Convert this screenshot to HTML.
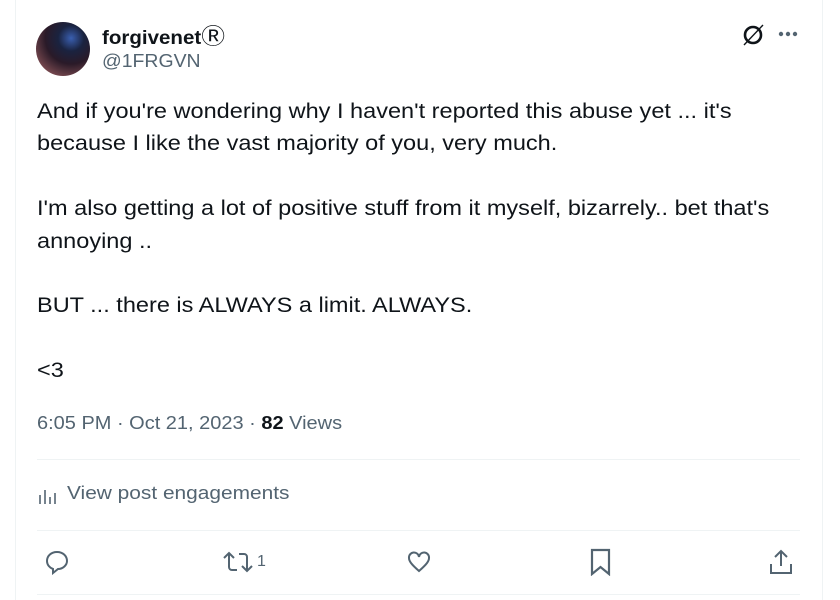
<!DOCTYPE html>
<html><head><meta charset="utf-8"><style>
body{margin:0;background:#fff;width:840px;height:600px;overflow:hidden;font-family:"Liberation Sans",sans-serif;position:relative;color:#0f1419}
.vl{position:absolute;top:0;bottom:0;width:1px;background:#eff3f4}
.av{position:absolute;left:36px;top:22px;width:54px;height:54px;border-radius:50%;background:radial-gradient(circle at 65% 30%,#3a5fb0 0,#1a2340 25%,#2a1a28 50%,#7a4a50 80%,#c89090 100%);overflow:hidden}
.sx{transform-origin:left top;white-space:nowrap}
.name{position:absolute;left:102px;top:19px;font-weight:bold;font-size:19px;transform:scaleX(1.08)}
.handle{position:absolute;left:102px;top:51px;font-size:18px;color:#536471;transform:scaleX(1.08)}
.body{position:absolute;left:37px;top:96px;font-size:21px;line-height:32.4px;transform:scaleX(1.12)}
.meta{position:absolute;left:37px;top:413px;font-size:18px;color:#536471;transform:scaleX(1.11)}
.hr{position:absolute;left:37px;width:763px;height:1px;background:#eff3f4}
.eng{position:absolute;left:67px;top:483px;font-size:18px;color:#536471;transform:scaleX(1.16)}
svg{position:absolute}
</style></head><body>
<div class="vl" style="left:15px"></div><div class="vl" style="left:822px"></div>
<div class="av"></div>
<div class="name sx">forgivenet<span style="font-weight:normal;font-size:22px">Ⓡ</span></div>
<div class="handle sx">@1FRGVN</div>
<svg style="left:740px;top:22px" width="26" height="26" viewBox="0 0 26 26"><circle cx="13" cy="13" r="8" fill="none" stroke="#0f1419" stroke-width="2.6"/><line x1="4" y1="23" x2="23" y2="3" stroke="#0f1419" stroke-width="1.4"/></svg>
<svg style="left:778px;top:30px" width="22" height="10"><circle cx="3" cy="4" r="2.2" fill="#536471"/><circle cx="10" cy="4" r="2.2" fill="#536471"/><circle cx="17" cy="4" r="2.2" fill="#536471"/></svg>
<div class="body sx">And if you're wondering why I haven't reported this abuse yet ... it's<br>because I like the vast majority of you, very much.<br><br>I'm also getting a lot of positive stuff from it myself, bizarrely.. bet that's<br>annoying ..<br><br>BUT ... there is ALWAYS a limit. ALWAYS.<br><br>&lt;3</div>
<div class="meta sx">6:05 PM · Oct 21, 2023 · <b style="color:#0f1419">82</b> Views</div>
<div class="hr" style="top:459px"></div>
<svg style="left:38px;top:485px" width="20" height="20"><g stroke="#536471" stroke-width="1.6"><line x1="2" y1="10" x2="2" y2="19"/><line x1="7" y1="5" x2="7" y2="19"/><line x1="12" y1="12" x2="12" y2="19"/><line x1="17" y1="8" x2="17" y2="19"/></g></svg>
<div class="eng sx">View post engagements</div>
<div class="hr" style="top:530px"></div>
<svg style="left:44px;top:549px" width="26" height="26" viewBox="0 0 26 26"><path d="M13 3C7 3 3 7 3 12c0 4 3 7 6 8v4l5-4c5 0 9-4 9-8 0-5-4-9-10-9z" fill="none" stroke="#536471" stroke-width="2"/></svg>
<svg style="left:222px;top:549px" width="34" height="26" viewBox="0 0 34 26"><g fill="none" stroke="#536471" stroke-width="2"><path d="M2 9l5-5 5 5M7 4v14a3 3 0 0 0 3 3h5"/><path d="M30 17l-5 5-5-5M25 22V8a3 3 0 0 0-3-3h-5"/></g></svg>
<div style="position:absolute;left:257px;top:553px;font-size:16px;color:#536471">1</div>
<svg style="left:406px;top:549px" width="26" height="26" viewBox="0 0 26 26"><path d="M13 22C5 15 3 12 3 9a5 5 0 0 1 10-1 5 5 0 0 1 10 1c0 3-2 6-10 13z" fill="none" stroke="#536471" stroke-width="2"/></svg>
<svg style="left:588px;top:548px" width="26" height="28" viewBox="0 0 26 28"><path d="M4 2h17v24l-8.5-7L4 26z" fill="none" stroke="#536471" stroke-width="2.2"/></svg>
<svg style="left:768px;top:548px" width="26" height="28" viewBox="0 0 26 28"><g fill="none" stroke="#536471" stroke-width="2"><path d="M13 18V3M7 9l6-6 6 6M3 16v9h20v-9"/></g></svg>
<div class="hr" style="top:594px"></div>
</body></html>
